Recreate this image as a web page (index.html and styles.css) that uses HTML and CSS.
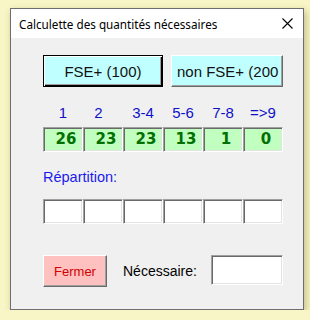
FILE: index.html
```html
<!DOCTYPE html>
<html>
<head>
  <title>Calculette des quantités nécessaires</title>
  <link rel="stylesheet" href="styles.css">
</head>
<body>
  <div class="window">
    <div class="titlebar">
      <span class="title">Calculette des quantités nécessaires</span>
      <svg class="close" width="11" height="11" viewBox="0 0 11 11">
        <path d="M0.5 0.5 L10.5 10.5 M10.5 0.5 L0.5 10.5" stroke="#000" stroke-width="1.1" fill="none"/>
      </svg>
    </div>
    <div class="content">
      <div class="buttons">
        <button class="btn btn-default">FSE+ (100)</button>
        <button class="btn btn-alt"><span>non FSE+ (200</span></button>
      </div>

      <div class="grid heads">
        <span>1</span><span class="nudge">2</span><span>3-4</span><span>5-6</span><span>7-8</span><span>=&gt;9</span>
      </div>
      <div class="grid">
        <div class="box val">26</div>
        <div class="box val">23</div>
        <div class="box val">23</div>
        <div class="box val">13</div>
        <div class="box val">1</div>
        <div class="box val">0</div>
      </div>

      <div class="label-rep">Répartition:</div>
      <div class="grid">
        <div class="box"></div>
        <div class="box"></div>
        <div class="box"></div>
        <div class="box"></div>
        <div class="box"></div>
        <div class="box"></div>
      </div>

      <div class="footer">
        <button class="btn btn-close">Fermer</button>
        <span class="label-nec">Nécessaire:</span>
        <div class="box nec"></div>
      </div>
    </div>
  </div>
</body>
</html>
```

FILE: styles.css
```css
body { margin: 0; padding: 8px 0 0 10px; background: #f8f5c6; font-family: "Liberation Sans", Arial, sans-serif; }

.window { width: 294px; height: 302px; box-sizing: border-box; border: 1px solid #6e6e6e; background: #f0f0f0; box-shadow: 2px 3px 7px rgba(90, 90, 20, 0.35); }

.titlebar { height: 29px; background: #fff; display: flex; align-items: center; justify-content: space-between; padding: 0 10px 0 8px; }
.title { font-family: "Noto Sans", sans-serif; font-size: 11.7px; color: #000; }
.close { display: block; margin-top: -1px; }

.content { padding: 17px 0 0 32px; }

.buttons { display: flex; gap: 8px; }
.btn { font-family: "Liberation Sans", Arial, sans-serif; font-size: 15px; color: #111; padding: 0; box-sizing: border-box; height: 32px; cursor: pointer; }
.btn-default { width: 120px; background: #c0ffff; border: 1px solid #000; box-shadow: inset 1px 1px 0 #fff, inset -1px -1px 0 #000, inset -2px -2px 0 #a0a0a0; }
.btn-alt { width: 112px; background: #c0ffff; border: 1px solid; border-color: #fff #696969 #696969 #fff; box-shadow: inset -1px -1px 0 #a0a0a0; overflow: hidden; white-space: nowrap; text-align: left; padding-left: 5px; }
.btn-close { width: 64px; background: #ffc0c0; color: #d00000; font-size: 13px; border: 1px solid; border-color: #fff #696969 #696969 #fff; box-shadow: inset -1px -1px 0 #a0a0a0; }

.grid { display: grid; grid-template-columns: repeat(6, 40px); }
.heads { margin-top: 16px; line-height: 20px; font-size: 15px; color: #1010c8; text-align: center; }
.heads .nudge { padding-right: 9px; }

.box { height: 25px; box-sizing: border-box; background: #fff; border: 1px solid; border-color: #a0a0a0 #fff #fff #a0a0a0; box-shadow: inset 1px 1px 0 #696969, inset -1px -1px 0 #e3e3e3; }
.heads + .grid { margin-top: 4px; }
.val { background: #c0ffc0; color: #007000; font-family: "DejaVu Sans", Verdana, sans-serif; font-weight: bold; font-size: 15px; line-height: 23px; text-align: center; padding-left: 6px; }

.label-rep { margin-top: 15px; line-height: 20px; font-size: 14.5px; color: #1a1aee; }
.label-rep + .grid { margin-top: 12px; }

.footer { display: flex; align-items: center; width: 240px; margin-top: 31px; }
.label-nec { margin-left: 16px; font-size: 14px; color: #000; }
.nec { width: 72px; height: 30px; margin-left: auto; margin-top: -2px; }
```
